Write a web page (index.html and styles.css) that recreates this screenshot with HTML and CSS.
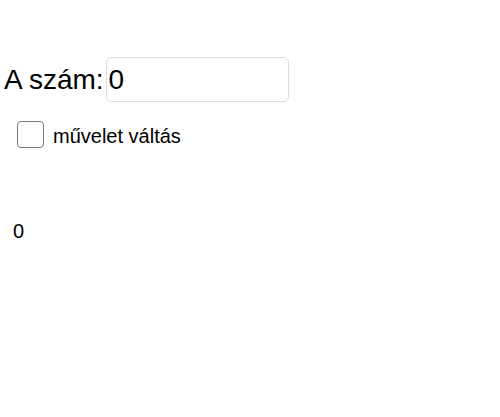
FILE: index.html
```html
<!DOCTYPE html>
<html lang="hu">
<head>
    <meta charset="UTF-8">
    <meta name="viewport" content="width=device-width, initial-scale=1.0">
    <title>Szám</title>
    <link rel="stylesheet" href="styles.css">
</head>
<body>

<div class="container">
    <div class="number-row">
        <label for="szam" class="number-label">A szám:</label>
        <input type="text" id="szam" class="number-input" value="0">
    </div>

    <div class="switch-row">
        <input type="checkbox" id="valtas" class="switch-box">
        <label for="valtas" class="switch-label">művelet váltás</label>
    </div>

    <div class="result" id="eredmeny">0</div>
</div>

</body>
</html>
```

FILE: styles.css
```css
body {
    font-family: "Liberation Sans", Arial, sans-serif;
    background-color: #fff;
    color: #000;
    margin: 0;
    padding: 0;
}
.container {
    padding: 57px 0 0 4px;
}
.number-row {
    display: flex;
    align-items: center;
    gap: 2px;
}
.number-label {
    font-size: 28px;
}
.number-input {
    width: 183px;
    height: 45px;
    box-sizing: border-box;
    border: 1px solid #dcdcdc;
    border-radius: 5px;
    padding: 0 2px;
    font-family: inherit;
    font-size: 28px;
    color: #000;
    outline: none;
}
.switch-row {
    display: flex;
    align-items: center;
    gap: 9px;
    margin: 19px 0 0 13px;
}
.switch-box {
    appearance: none;
    width: 27px;
    height: 27px;
    margin: 0;
    border: 1px solid #7a7a7a;
    border-radius: 4px;
    background: #fff;
}
.switch-label {
    font-size: 20px;
    padding-top: 3px;
}
.result {
    font-size: 20px;
    margin: 72px 0 0 9px;
}
```
